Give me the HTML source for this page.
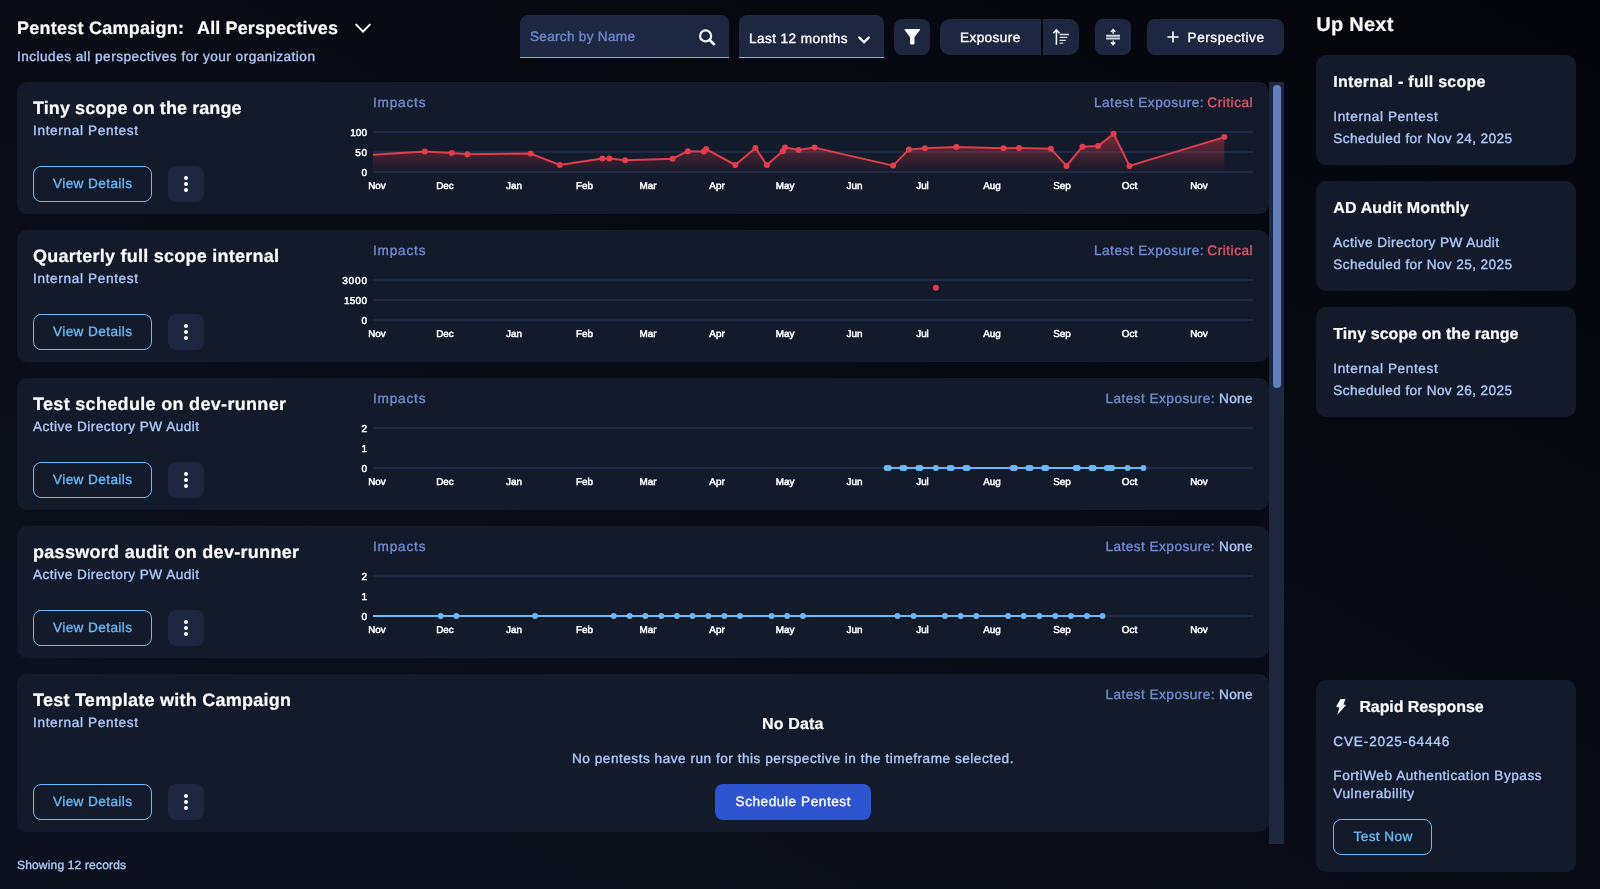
<!DOCTYPE html><html lang="en"><head><meta charset="utf-8"><title>Pentest Campaign</title><style>
*{box-sizing:border-box;margin:0;padding:0}
html,body{width:1600px;height:889px;overflow:hidden;background:linear-gradient(to bottom left,#03050a,#0e121f);font-family:"Liberation Sans", sans-serif;color:#fff}
.t{position:absolute;white-space:pre;display:block;text-rendering:geometricPrecision}
.r{-webkit-text-stroke:0.35px currentColor}
.t:not(.r){-webkit-text-stroke:0.2px currentColor}
.abs{position:absolute}
.card{position:absolute;left:17px;width:1252px;height:132px;background:#131a2a;border-radius:10px}
.rcard{position:absolute;left:1316px;width:260px;height:110px;background:#131a2a;border-radius:10px}
.btn-o{position:absolute;border:1px solid #6cb8f7;border-radius:8px;background:transparent}
button{font:inherit;color:inherit}
.btn-k{position:absolute;border:0;width:36px;height:36px;border-radius:8px;background:#1e2740}
.btn-k i{position:absolute;left:15.8px;width:4.4px;height:4.4px;margin-top:-0.2px;border-radius:50%;background:#fff}
.ctrl{position:absolute;background:#1e2740;border-radius:8px}
.field{position:absolute;background:#1e2740;border-radius:8px 8px 0 0;border-bottom:1px solid #8ea8ea}
svg{position:absolute;overflow:visible}
svg text{font-family:"Liberation Sans", sans-serif}
.ax{fill:#fff;stroke:#fff;stroke-width:0.5px;text-rendering:geometricPrecision}
</style></head><body><main style="will-change:transform"><header><h1 class="t" style="left:17px;top:17.00px;font-size:18px;line-height:22px;font-weight:700;letter-spacing:0.248px;">Pentest Campaign:</h1><span class="t" style="left:197px;top:17.00px;font-size:18px;line-height:22px;font-weight:700;letter-spacing:0.128px;">All Perspectives</span><svg style="left:355px;top:22.5px" width="16" height="11" viewBox="0 0 16 11"><path d="M1.2 1.6 L8 8.6 L14.8 1.6" fill="none" stroke="#fff" stroke-width="2" stroke-linecap="round"/></svg><p class="t r" style="left:17px;top:48.00px;font-size:13.6px;line-height:17px;color:#acc9fc;letter-spacing:0.482px;">Includes all perspectives for your organization</p><div class="field" style="left:520px;top:15px;width:209px;height:43px"></div><span class="t r" style="left:530px;top:28.00px;font-size:13.6px;line-height:17px;color:#6b89d2;letter-spacing:0.288px;">Search by Name</span><svg style="left:697px;top:27px" width="20" height="20" viewBox="0 0 20 20"><circle cx="8.6" cy="8.9" r="5.5" fill="none" stroke="#fff" stroke-width="2.2"/><path d="M12.8 13.1 L17 17.2" stroke="#fff" stroke-width="2.6" stroke-linecap="round"/></svg><div class="field" style="left:739px;top:15px;width:145px;height:43px"></div><span class="t r" style="left:749px;top:30.00px;font-size:13.6px;line-height:17px;letter-spacing:0.427px;">Last 12 months</span><svg style="left:858px;top:35.5px" width="12" height="8" viewBox="0 0 12 8"><path d="M1.2 1.5 L6.05 6.2 L10.9 1.5" fill="none" stroke="#fff" stroke-width="2.3" stroke-linecap="round"/></svg><button class="ctrl" style="left:894px;top:19px;width:36px;height:36px;border:0"></button><svg style="left:903.75px;top:29px" width="17" height="16" viewBox="0 0 17 16"><path d="M1 0.6 H15.5 L9.9 7.8 V14.4 Q8.25 15.4 6.6 14.4 V7.8 Z" fill="#fff" stroke="#fff" stroke-width="1.2" stroke-linejoin="round"/></svg><button class="ctrl" style="left:940px;top:19px;width:101px;height:36px;border:0;border-radius:10px 0 0 10px"></button><span class="t r" style="left:960px;top:29.00px;font-size:13.6px;line-height:17px;letter-spacing:0.395px;">Exposure</span><button class="ctrl" style="left:1042.5px;top:19px;width:36.5px;height:36px;border:0;border-radius:0 10px 10px 0"></button><svg style="left:1052px;top:29px" width="18" height="16" viewBox="0 0 18 16"><path d="M4.4 15.7 V1.2 M1.3 4.2 L4.4 0.9 L7.5 4.2" fill="none" stroke="#fff" stroke-width="1.5"/><path d="M7.6 5.5 H16.9 M7.6 8.4 H15.3 M7.6 11.3 H13.8 M7.6 14.1 H11.2" stroke="#d3d6de" stroke-width="1.3"/></svg><button class="ctrl" style="left:1095px;top:19px;width:36px;height:36px;border:0"></button><svg style="left:1106px;top:28px" width="14" height="18" viewBox="0 0 14 18"><path d="M0.1 7.75 H14 M0.1 10.45 H14" stroke="#cfd2db" stroke-width="1.9"/><path d="M7.1 5.8 V2 M4.9 3.9 L7.1 1.5 L9.3 3.9 M7.1 12.4 V16.2 M4.9 14.3 L7.1 16.7 L9.3 14.3" fill="none" stroke="#fff" stroke-width="1.3"/></svg><button class="ctrl" style="left:1147px;top:19px;width:137px;height:36px;border:0"></button><svg style="left:1167px;top:31px" width="12" height="12" viewBox="0 0 12 12"><path d="M6 0.4 V11.6 M0.4 6 H11.6" stroke="#fff" stroke-width="1.6"/></svg><span class="t r" style="left:1187.6px;top:29.00px;font-size:13.6px;line-height:17px;letter-spacing:0.537px;">Perspective</span></header><section><article class="card" style="top:82px;height:132px"></article><h2 class="t" style="left:33px;top:97.00px;font-size:18px;line-height:22px;font-weight:700;letter-spacing:0.081px;">Tiny scope on the range</h2><p class="t r" style="left:33px;top:122.00px;font-size:13.6px;line-height:17px;color:#acc9fc;letter-spacing:0.652px;">Internal Pentest</p><button class="btn-o" style="left:33px;top:166px;width:119px;height:36px"></button><span class="t r" style="left:53px;top:175.00px;font-size:13.6px;line-height:17px;color:#6cb8f7;letter-spacing:0.405px;">View Details</span><button class="btn-k" style="left:168px;top:166px"><i style="top:10px"></i><i style="top:16px"></i><i style="top:22px"></i></button><span class="t r" style="left:373px;top:94.00px;font-size:13.6px;line-height:17px;color:#6e8cd5;letter-spacing:0.818px;">Impacts</span><span class="t r" style="left:1094px;top:94.00px;font-size:13.6px;line-height:17px;color:#6e8cd5;letter-spacing:0.499px;">Latest Exposure:</span><span class="t r" style="left:1207.3px;top:94.00px;font-size:13.6px;line-height:17px;color:#e4566b;letter-spacing:0.536px;">Critical</span><svg class="chart" style="left:0;top:0" width="1600" height="889" viewBox="0 0 1600 889"><line x1="373" x2="1253" y1="132.0" y2="132.0" stroke="#1e2b46" stroke-width="2"/><line x1="373" x2="1253" y1="152.0" y2="152.0" stroke="#1e2b46" stroke-width="2"/><line x1="373" x2="1253" y1="172.0" y2="172.0" stroke="#1e2b46" stroke-width="2"/><defs><linearGradient id="rg" x1="0" y1="132" x2="0" y2="172" gradientUnits="userSpaceOnUse"><stop offset="0" stop-color="#e23d4b" stop-opacity="0.5"/><stop offset="1" stop-color="#e23d4b" stop-opacity="0.02"/></linearGradient></defs><path d="M373,172 L373,154.8 L424.8,151.5 L451.8,153 L467.4,154.2 L530.7,153.6 L559.8,165 L602.4,158.4 L609.3,158.4 L625.2,160.2 L672.6,158.7 L687.9,151.2 L703.8,151.5 L706.2,149.1 L735.3,165 L755.4,147.9 L766.8,165 L782.7,151.2 L785,147.6 L798.6,150 L814.5,147.6 L893.1,165.6 L909,149.4 L924.9,148.2 L956.4,147 L1003.5,148.2 L1019.1,147.9 L1050.9,148.8 L1066.5,165.9 L1082.4,146.7 L1098,146.1 L1113.6,133.8 L1129.5,165.9 L1224.3,137.1 L1224.3,172 Z" fill="url(#rg)"/><polyline points="373,154.8 424.8,151.5 451.8,153 467.4,154.2 530.7,153.6 559.8,165 602.4,158.4 609.3,158.4 625.2,160.2 672.6,158.7 687.9,151.2 703.8,151.5 706.2,149.1 735.3,165 755.4,147.9 766.8,165 782.7,151.2 785,147.6 798.6,150 814.5,147.6 893.1,165.6 909,149.4 924.9,148.2 956.4,147 1003.5,148.2 1019.1,147.9 1050.9,148.8 1066.5,165.9 1082.4,146.7 1098,146.1 1113.6,133.8 1129.5,165.9 1224.3,137.1" fill="none" stroke="#e23d4b" stroke-width="2" stroke-linejoin="round"/><circle cx="424.8" cy="151.5" r="3" fill="#e23d4b"/><circle cx="451.8" cy="153" r="3" fill="#e23d4b"/><circle cx="467.4" cy="154.2" r="3" fill="#e23d4b"/><circle cx="530.7" cy="153.6" r="3" fill="#e23d4b"/><circle cx="559.8" cy="165" r="3" fill="#e23d4b"/><circle cx="602.4" cy="158.4" r="3" fill="#e23d4b"/><circle cx="609.3" cy="158.4" r="3" fill="#e23d4b"/><circle cx="625.2" cy="160.2" r="3" fill="#e23d4b"/><circle cx="672.6" cy="158.7" r="3" fill="#e23d4b"/><circle cx="687.9" cy="151.2" r="3" fill="#e23d4b"/><circle cx="703.8" cy="151.5" r="3" fill="#e23d4b"/><circle cx="706.2" cy="149.1" r="3" fill="#e23d4b"/><circle cx="735.3" cy="165" r="3" fill="#e23d4b"/><circle cx="755.4" cy="147.9" r="3" fill="#e23d4b"/><circle cx="766.8" cy="165" r="3" fill="#e23d4b"/><circle cx="782.7" cy="151.2" r="3" fill="#e23d4b"/><circle cx="785" cy="147.6" r="3" fill="#e23d4b"/><circle cx="798.6" cy="150" r="3" fill="#e23d4b"/><circle cx="814.5" cy="147.6" r="3" fill="#e23d4b"/><circle cx="893.1" cy="165.6" r="3" fill="#e23d4b"/><circle cx="909" cy="149.4" r="3" fill="#e23d4b"/><circle cx="924.9" cy="148.2" r="3" fill="#e23d4b"/><circle cx="956.4" cy="147" r="3" fill="#e23d4b"/><circle cx="1003.5" cy="148.2" r="3" fill="#e23d4b"/><circle cx="1019.1" cy="147.9" r="3" fill="#e23d4b"/><circle cx="1050.9" cy="148.8" r="3" fill="#e23d4b"/><circle cx="1066.5" cy="165.9" r="3" fill="#e23d4b"/><circle cx="1082.4" cy="146.7" r="3" fill="#e23d4b"/><circle cx="1098" cy="146.1" r="3" fill="#e23d4b"/><circle cx="1113.6" cy="133.8" r="3" fill="#e23d4b"/><circle cx="1129.5" cy="165.9" r="3" fill="#e23d4b"/><circle cx="1224.3" cy="137.1" r="3" fill="#e23d4b"/><text x="367" y="136.0" text-anchor="end" font-size="10" letter-spacing="0" class="ax">100</text><text x="367.6" y="156.0" text-anchor="end" font-size="10" letter-spacing="0.6" class="ax">50</text><text x="367" y="176.0" text-anchor="end" font-size="10" letter-spacing="0" class="ax">0</text><text x="377" y="189.0" text-anchor="middle" font-size="9.9" class="ax">Nov</text><text x="445" y="189.0" text-anchor="middle" font-size="9.9" class="ax">Dec</text><text x="514" y="189.0" text-anchor="middle" font-size="9.9" class="ax">Jan</text><text x="584.5" y="189.0" text-anchor="middle" font-size="9.9" class="ax">Feb</text><text x="648" y="189.0" text-anchor="middle" font-size="9.9" class="ax">Mar</text><text x="717" y="189.0" text-anchor="middle" font-size="9.9" class="ax">Apr</text><text x="785" y="189.0" text-anchor="middle" font-size="9.9" class="ax">May</text><text x="854.5" y="189.0" text-anchor="middle" font-size="9.9" class="ax">Jun</text><text x="922.5" y="189.0" text-anchor="middle" font-size="9.9" class="ax">Jul</text><text x="992" y="189.0" text-anchor="middle" font-size="9.9" class="ax">Aug</text><text x="1062" y="189.0" text-anchor="middle" font-size="9.9" class="ax">Sep</text><text x="1129.5" y="189.0" text-anchor="middle" font-size="9.9" class="ax">Oct</text><text x="1199" y="189.0" text-anchor="middle" font-size="9.9" class="ax">Nov</text></svg><article class="card" style="top:230px;height:132px"></article><h2 class="t" style="left:33px;top:245.00px;font-size:18px;line-height:22px;font-weight:700;letter-spacing:0.248px;">Quarterly full scope internal</h2><p class="t r" style="left:33px;top:270.00px;font-size:13.6px;line-height:17px;color:#acc9fc;letter-spacing:0.652px;">Internal Pentest</p><button class="btn-o" style="left:33px;top:314px;width:119px;height:36px"></button><span class="t r" style="left:53px;top:323.00px;font-size:13.6px;line-height:17px;color:#6cb8f7;letter-spacing:0.405px;">View Details</span><button class="btn-k" style="left:168px;top:314px"><i style="top:10px"></i><i style="top:16px"></i><i style="top:22px"></i></button><span class="t r" style="left:373px;top:242.00px;font-size:13.6px;line-height:17px;color:#6e8cd5;letter-spacing:0.818px;">Impacts</span><span class="t r" style="left:1094px;top:242.00px;font-size:13.6px;line-height:17px;color:#6e8cd5;letter-spacing:0.499px;">Latest Exposure:</span><span class="t r" style="left:1207.3px;top:242.00px;font-size:13.6px;line-height:17px;color:#e4566b;letter-spacing:0.536px;">Critical</span><svg class="chart" style="left:0;top:0" width="1600" height="889" viewBox="0 0 1600 889"><line x1="373" x2="1253" y1="280.0" y2="280.0" stroke="#1e2b46" stroke-width="2"/><line x1="373" x2="1253" y1="300.0" y2="300.0" stroke="#1e2b46" stroke-width="2"/><line x1="373" x2="1253" y1="320.0" y2="320.0" stroke="#1e2b46" stroke-width="2"/><circle cx="935.9" cy="287.8" r="3" fill="#e23d4b"/><text x="367.85" y="284.0" text-anchor="end" font-size="10" letter-spacing="0.85" class="ax">3000</text><text x="367.25" y="304.0" text-anchor="end" font-size="10" letter-spacing="0.25" class="ax">1500</text><text x="367" y="324.0" text-anchor="end" font-size="10" letter-spacing="0" class="ax">0</text><text x="377" y="337.0" text-anchor="middle" font-size="9.9" class="ax">Nov</text><text x="445" y="337.0" text-anchor="middle" font-size="9.9" class="ax">Dec</text><text x="514" y="337.0" text-anchor="middle" font-size="9.9" class="ax">Jan</text><text x="584.5" y="337.0" text-anchor="middle" font-size="9.9" class="ax">Feb</text><text x="648" y="337.0" text-anchor="middle" font-size="9.9" class="ax">Mar</text><text x="717" y="337.0" text-anchor="middle" font-size="9.9" class="ax">Apr</text><text x="785" y="337.0" text-anchor="middle" font-size="9.9" class="ax">May</text><text x="854.5" y="337.0" text-anchor="middle" font-size="9.9" class="ax">Jun</text><text x="922.5" y="337.0" text-anchor="middle" font-size="9.9" class="ax">Jul</text><text x="992" y="337.0" text-anchor="middle" font-size="9.9" class="ax">Aug</text><text x="1062" y="337.0" text-anchor="middle" font-size="9.9" class="ax">Sep</text><text x="1129.5" y="337.0" text-anchor="middle" font-size="9.9" class="ax">Oct</text><text x="1199" y="337.0" text-anchor="middle" font-size="9.9" class="ax">Nov</text></svg><article class="card" style="top:378px;height:132px"></article><h2 class="t" style="left:33px;top:393.00px;font-size:18px;line-height:22px;font-weight:700;letter-spacing:0.319px;">Test schedule on dev-runner</h2><p class="t r" style="left:33px;top:418.00px;font-size:13.6px;line-height:17px;color:#acc9fc;letter-spacing:0.464px;">Active Directory PW Audit</p><button class="btn-o" style="left:33px;top:462px;width:119px;height:36px"></button><span class="t r" style="left:53px;top:471.00px;font-size:13.6px;line-height:17px;color:#6cb8f7;letter-spacing:0.405px;">View Details</span><button class="btn-k" style="left:168px;top:462px"><i style="top:10px"></i><i style="top:16px"></i><i style="top:22px"></i></button><span class="t r" style="left:373px;top:390.00px;font-size:13.6px;line-height:17px;color:#6e8cd5;letter-spacing:0.818px;">Impacts</span><span class="t r" style="left:1105.5px;top:390.00px;font-size:13.6px;line-height:17px;color:#6e8cd5;letter-spacing:0.466px;">Latest Exposure:</span><span class="t r" style="left:1219px;top:390.00px;font-size:13.6px;line-height:17px;color:#acc9fc;letter-spacing:0.333px;">None</span><svg class="chart" style="left:0;top:0" width="1600" height="889" viewBox="0 0 1600 889"><line x1="373" x2="1253" y1="428.0" y2="428.0" stroke="#1e2b46" stroke-width="2"/><line x1="373" x2="1253" y1="468.0" y2="468.0" stroke="#1e2b46" stroke-width="2"/><line x1="886.6" x2="1143.4" y1="468" y2="468" stroke="#6cb8f7" stroke-width="2"/><circle cx="886.6" cy="468" r="3" fill="#6cb8f7"/><circle cx="888.8" cy="468" r="3" fill="#6cb8f7"/><circle cx="902.3" cy="468" r="3" fill="#6cb8f7"/><circle cx="904.5" cy="468" r="3" fill="#6cb8f7"/><circle cx="918.3" cy="468" r="3" fill="#6cb8f7"/><circle cx="920.5" cy="468" r="3" fill="#6cb8f7"/><circle cx="935.9" cy="468" r="3" fill="#6cb8f7"/><circle cx="949.5" cy="468" r="3" fill="#6cb8f7"/><circle cx="951.7" cy="468" r="3" fill="#6cb8f7"/><circle cx="965.4" cy="468" r="3" fill="#6cb8f7"/><circle cx="967.6" cy="468" r="3" fill="#6cb8f7"/><circle cx="1012.7" cy="468" r="3" fill="#6cb8f7"/><circle cx="1014.9" cy="468" r="3" fill="#6cb8f7"/><circle cx="1028.4" cy="468" r="3" fill="#6cb8f7"/><circle cx="1030.6" cy="468" r="3" fill="#6cb8f7"/><circle cx="1044.1" cy="468" r="3" fill="#6cb8f7"/><circle cx="1046.3" cy="468" r="3" fill="#6cb8f7"/><circle cx="1075.6" cy="468" r="3" fill="#6cb8f7"/><circle cx="1077.8" cy="468" r="3" fill="#6cb8f7"/><circle cx="1091.4" cy="468" r="3" fill="#6cb8f7"/><circle cx="1093.6" cy="468" r="3" fill="#6cb8f7"/><circle cx="1106.8" cy="468" r="3" fill="#6cb8f7"/><circle cx="1109.4" cy="468" r="3" fill="#6cb8f7"/><circle cx="1112.1" cy="468" r="3" fill="#6cb8f7"/><circle cx="1127.6" cy="468" r="3" fill="#6cb8f7"/><circle cx="1143.4" cy="468" r="3" fill="#6cb8f7"/><text x="367" y="432.0" text-anchor="end" font-size="10" letter-spacing="0" class="ax">2</text><text x="367" y="452.0" text-anchor="end" font-size="10" letter-spacing="0" class="ax">1</text><text x="367" y="472.0" text-anchor="end" font-size="10" letter-spacing="0" class="ax">0</text><text x="377" y="485.0" text-anchor="middle" font-size="9.9" class="ax">Nov</text><text x="445" y="485.0" text-anchor="middle" font-size="9.9" class="ax">Dec</text><text x="514" y="485.0" text-anchor="middle" font-size="9.9" class="ax">Jan</text><text x="584.5" y="485.0" text-anchor="middle" font-size="9.9" class="ax">Feb</text><text x="648" y="485.0" text-anchor="middle" font-size="9.9" class="ax">Mar</text><text x="717" y="485.0" text-anchor="middle" font-size="9.9" class="ax">Apr</text><text x="785" y="485.0" text-anchor="middle" font-size="9.9" class="ax">May</text><text x="854.5" y="485.0" text-anchor="middle" font-size="9.9" class="ax">Jun</text><text x="922.5" y="485.0" text-anchor="middle" font-size="9.9" class="ax">Jul</text><text x="992" y="485.0" text-anchor="middle" font-size="9.9" class="ax">Aug</text><text x="1062" y="485.0" text-anchor="middle" font-size="9.9" class="ax">Sep</text><text x="1129.5" y="485.0" text-anchor="middle" font-size="9.9" class="ax">Oct</text><text x="1199" y="485.0" text-anchor="middle" font-size="9.9" class="ax">Nov</text></svg><article class="card" style="top:526px;height:132px"></article><h2 class="t" style="left:33px;top:541.00px;font-size:18px;line-height:22px;font-weight:700;letter-spacing:0.295px;">password audit on dev-runner</h2><p class="t r" style="left:33px;top:566.00px;font-size:13.6px;line-height:17px;color:#acc9fc;letter-spacing:0.464px;">Active Directory PW Audit</p><button class="btn-o" style="left:33px;top:610px;width:119px;height:36px"></button><span class="t r" style="left:53px;top:619.00px;font-size:13.6px;line-height:17px;color:#6cb8f7;letter-spacing:0.405px;">View Details</span><button class="btn-k" style="left:168px;top:610px"><i style="top:10px"></i><i style="top:16px"></i><i style="top:22px"></i></button><span class="t r" style="left:373px;top:538.00px;font-size:13.6px;line-height:17px;color:#6e8cd5;letter-spacing:0.818px;">Impacts</span><span class="t r" style="left:1105.5px;top:538.00px;font-size:13.6px;line-height:17px;color:#6e8cd5;letter-spacing:0.466px;">Latest Exposure:</span><span class="t r" style="left:1219px;top:538.00px;font-size:13.6px;line-height:17px;color:#acc9fc;letter-spacing:0.333px;">None</span><svg class="chart" style="left:0;top:0" width="1600" height="889" viewBox="0 0 1600 889"><line x1="373" x2="1253" y1="576.0" y2="576.0" stroke="#1e2b46" stroke-width="2"/><line x1="373" x2="1253" y1="616.0" y2="616.0" stroke="#1e2b46" stroke-width="2"/><line x1="373" x2="1102.5" y1="616" y2="616" stroke="#6cb8f7" stroke-width="2"/><circle cx="440.6" cy="616" r="3" fill="#6cb8f7"/><circle cx="456.3" cy="616" r="3" fill="#6cb8f7"/><circle cx="535" cy="616" r="3" fill="#6cb8f7"/><circle cx="613.75" cy="616" r="3" fill="#6cb8f7"/><circle cx="629.7" cy="616" r="3" fill="#6cb8f7"/><circle cx="645.3" cy="616" r="3" fill="#6cb8f7"/><circle cx="661.25" cy="616" r="3" fill="#6cb8f7"/><circle cx="676.9" cy="616" r="3" fill="#6cb8f7"/><circle cx="692.5" cy="616" r="3" fill="#6cb8f7"/><circle cx="708.4" cy="616" r="3" fill="#6cb8f7"/><circle cx="724.4" cy="616" r="3" fill="#6cb8f7"/><circle cx="740" cy="616" r="3" fill="#6cb8f7"/><circle cx="771.6" cy="616" r="3" fill="#6cb8f7"/><circle cx="787.2" cy="616" r="3" fill="#6cb8f7"/><circle cx="802.9" cy="616" r="3" fill="#6cb8f7"/><circle cx="897.5" cy="616" r="3" fill="#6cb8f7"/><circle cx="913.6" cy="616" r="3" fill="#6cb8f7"/><circle cx="945" cy="616" r="3" fill="#6cb8f7"/><circle cx="960.6" cy="616" r="3" fill="#6cb8f7"/><circle cx="976.25" cy="616" r="3" fill="#6cb8f7"/><circle cx="1008.1" cy="616" r="3" fill="#6cb8f7"/><circle cx="1023.75" cy="616" r="3" fill="#6cb8f7"/><circle cx="1039.4" cy="616" r="3" fill="#6cb8f7"/><circle cx="1055.3" cy="616" r="3" fill="#6cb8f7"/><circle cx="1070.9" cy="616" r="3" fill="#6cb8f7"/><circle cx="1086.9" cy="616" r="3" fill="#6cb8f7"/><circle cx="1102.5" cy="616" r="3" fill="#6cb8f7"/><text x="367" y="580.0" text-anchor="end" font-size="10" letter-spacing="0" class="ax">2</text><text x="367" y="600.0" text-anchor="end" font-size="10" letter-spacing="0" class="ax">1</text><text x="367" y="620.0" text-anchor="end" font-size="10" letter-spacing="0" class="ax">0</text><text x="377" y="633.0" text-anchor="middle" font-size="9.9" class="ax">Nov</text><text x="445" y="633.0" text-anchor="middle" font-size="9.9" class="ax">Dec</text><text x="514" y="633.0" text-anchor="middle" font-size="9.9" class="ax">Jan</text><text x="584.5" y="633.0" text-anchor="middle" font-size="9.9" class="ax">Feb</text><text x="648" y="633.0" text-anchor="middle" font-size="9.9" class="ax">Mar</text><text x="717" y="633.0" text-anchor="middle" font-size="9.9" class="ax">Apr</text><text x="785" y="633.0" text-anchor="middle" font-size="9.9" class="ax">May</text><text x="854.5" y="633.0" text-anchor="middle" font-size="9.9" class="ax">Jun</text><text x="922.5" y="633.0" text-anchor="middle" font-size="9.9" class="ax">Jul</text><text x="992" y="633.0" text-anchor="middle" font-size="9.9" class="ax">Aug</text><text x="1062" y="633.0" text-anchor="middle" font-size="9.9" class="ax">Sep</text><text x="1129.5" y="633.0" text-anchor="middle" font-size="9.9" class="ax">Oct</text><text x="1199" y="633.0" text-anchor="middle" font-size="9.9" class="ax">Nov</text></svg><article class="card" style="top:674px;height:158px"></article><h2 class="t" style="left:33px;top:689.00px;font-size:18px;line-height:22px;font-weight:700;letter-spacing:0.255px;">Test Template with Campaign</h2><p class="t r" style="left:33px;top:714.00px;font-size:13.6px;line-height:17px;color:#acc9fc;letter-spacing:0.652px;">Internal Pentest</p><button class="btn-o" style="left:33px;top:784px;width:119px;height:36px"></button><span class="t r" style="left:53px;top:793.00px;font-size:13.6px;line-height:17px;color:#6cb8f7;letter-spacing:0.405px;">View Details</span><button class="btn-k" style="left:168px;top:784px"><i style="top:10px"></i><i style="top:16px"></i><i style="top:22px"></i></button><span class="t r" style="left:1105.5px;top:686.00px;font-size:13.6px;line-height:17px;color:#6e8cd5;letter-spacing:0.466px;">Latest Exposure:</span><span class="t r" style="left:1219px;top:686.00px;font-size:13.6px;line-height:17px;color:#acc9fc;letter-spacing:0.333px;">None</span><h3 class="t" style="left:762px;top:715.00px;font-size:16px;line-height:19px;font-weight:700;letter-spacing:0.174px;">No Data</h3><p class="t r" style="left:572px;top:750.00px;font-size:13.6px;line-height:17px;color:#acc9fc;letter-spacing:0.522px;">No pentests have run for this perspective in the timeframe selected.</p><button class="abs" style="left:715px;top:784px;width:156px;height:36px;border:0;border-radius:8px;background:#2f54d0"></button><span class="t r" style="left:735.5px;top:793.00px;font-size:13.6px;line-height:17px;letter-spacing:0.562px;">Schedule Pentest</span><div class="abs" style="left:1269px;top:82px;width:15px;height:762px;background:#1e2740"></div><div class="abs" style="left:1273px;top:85px;width:8px;height:303px;border-radius:4px;background:#6280bd"></div><p class="t r" style="left:17px;top:857.00px;font-size:12px;line-height:16px;color:#acc9fc;letter-spacing:0.173px;">Showing 12 records</p></section><aside><h2 class="t" style="left:1316.3px;top:13.00px;font-size:20px;line-height:24px;font-weight:700;letter-spacing:0.237px;">Up Next</h2><div class="rcard" style="top:55px"></div><h3 class="t" style="left:1333.3px;top:73.00px;font-size:16px;line-height:19px;font-weight:700;letter-spacing:0.276px;">Internal - full scope</h3><p class="t r" style="left:1333.3px;top:108.00px;font-size:13.6px;line-height:17px;color:#acc9fc;letter-spacing:0.612px;">Internal Pentest</p><p class="t r" style="left:1333.3px;top:130.00px;font-size:13.6px;line-height:17px;color:#acc9fc;letter-spacing:0.407px;">Scheduled for Nov 24, 2025</p><div class="rcard" style="top:181px"></div><h3 class="t" style="left:1333.3px;top:199.00px;font-size:16px;line-height:19px;font-weight:700;letter-spacing:0.139px;">AD Audit Monthly</h3><p class="t r" style="left:1333.3px;top:234.00px;font-size:13.6px;line-height:17px;color:#acc9fc;letter-spacing:0.451px;">Active Directory PW Audit</p><p class="t r" style="left:1333.3px;top:256.00px;font-size:13.6px;line-height:17px;color:#acc9fc;letter-spacing:0.407px;">Scheduled for Nov 25, 2025</p><div class="rcard" style="top:307px"></div><h3 class="t" style="left:1333.3px;top:325.00px;font-size:16px;line-height:19px;font-weight:700;letter-spacing:0.066px;">Tiny scope on the range</h3><p class="t r" style="left:1333.3px;top:360.00px;font-size:13.6px;line-height:17px;color:#acc9fc;letter-spacing:0.612px;">Internal Pentest</p><p class="t r" style="left:1333.3px;top:382.00px;font-size:13.6px;line-height:17px;color:#acc9fc;letter-spacing:0.407px;">Scheduled for Nov 26, 2025</p><div class="rcard" style="top:680px;height:192px"></div><svg style="left:1336px;top:699px" width="11" height="16" viewBox="0 0 11 16"><path d="M4.55 0.1 H9.3 L7.5 5.4 L10.1 6.1 L1.2 16 L3.4 8.7 L0 7.7 Z" fill="#fff"/></svg><h3 class="t" style="left:1359.4px;top:698.00px;font-size:16px;line-height:19px;font-weight:700;letter-spacing:-0.089px;">Rapid Response</h3><p class="t r" style="left:1333.3px;top:733.00px;font-size:13.6px;line-height:17px;color:#acc9fc;letter-spacing:0.843px;">CVE-2025-64446</p><p class="t r" style="left:1333.3px;top:767.00px;font-size:13.6px;line-height:17px;color:#acc9fc;letter-spacing:0.547px;">FortiWeb Authentication Bypass</p><p class="t r" style="left:1333.3px;top:785.00px;font-size:13.6px;line-height:17px;color:#acc9fc;letter-spacing:0.596px;">Vulnerability</p><button class="btn-o" style="left:1333px;top:819px;width:99px;height:36px"></button><span class="t r" style="left:1353.5px;top:828.00px;font-size:13.6px;line-height:17px;color:#6cb8f7;letter-spacing:0.399px;">Test Now</span></aside></main></body></html>
